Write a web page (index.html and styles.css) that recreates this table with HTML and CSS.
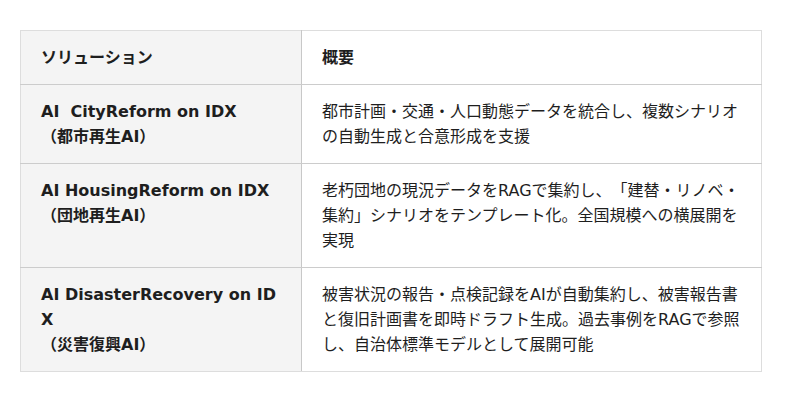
FILE: index.html
```html
<!DOCTYPE html>
<html lang="ja">
<head>
<meta charset="utf-8">
<link rel="stylesheet" href="styles.css">
</head>
<body>
<table class="sol-table">
  <thead>
    <tr>
      <th class="col-name">ソリューション</th>
      <th class="col-desc">概要</th>
    </tr>
  </thead>
  <tbody>
    <tr>
      <td class="col-name">AI&nbsp; CityReform on IDX<br>（都市再生AI）</td>
      <td class="col-desc">都市計画・交通・人口動態データを統合し、複数シナリオの自動生成と合意形成を支援</td>
    </tr>
    <tr>
      <td class="col-name">AI HousingReform on IDX<br>（団地再生AI）</td>
      <td class="col-desc">老朽団地の現況データをRAGで集約し、「建替・リノベ・集約」シナリオをテンプレート化。全国規模への横展開を実現</td>
    </tr>
    <tr>
      <td class="col-name">AI DisasterRecovery on IDX<br>（災害復興AI）</td>
      <td class="col-desc">被害状況の報告・点検記録をAIが自動集約し、被害報告書と復旧計画書を即時ドラフト生成。過去事例をRAGで参照し、自治体標準モデルとして展開可能</td>
    </tr>
  </tbody>
</table>
</body>
</html>
```

FILE: styles.css
```css
html, body {
  margin: 0;
  padding: 0;
  background: #ffffff;
}
body {
  padding: 30px 20px;
  font-family: "DejaVu Sans", "Noto Sans CJK JP", sans-serif;
  font-size: 16px;
  color: #1e1e1e;
  text-spacing-trim: space-all;
}
.sol-table {
  width: 742px;
  border-collapse: collapse;
  border: 1px solid #dddddd;
  table-layout: fixed;
}
.sol-table th,
.sol-table td {
  padding: 14px 20px;
  line-height: 25px;
  text-align: left;
  vertical-align: top;
  border-bottom: 1px solid #cccccc;
}
.sol-table tr:last-child td {
  border-bottom: 1px solid #dddddd;
}
.sol-table th {
  font-weight: bold;
}
.col-name {
  width: 240px;
  background: #f4f4f4;
  font-weight: bold;
  border-right: 1px solid #c8c8c8;
  word-break: break-all;
}
.col-desc {
  background: #ffffff;
}
```
